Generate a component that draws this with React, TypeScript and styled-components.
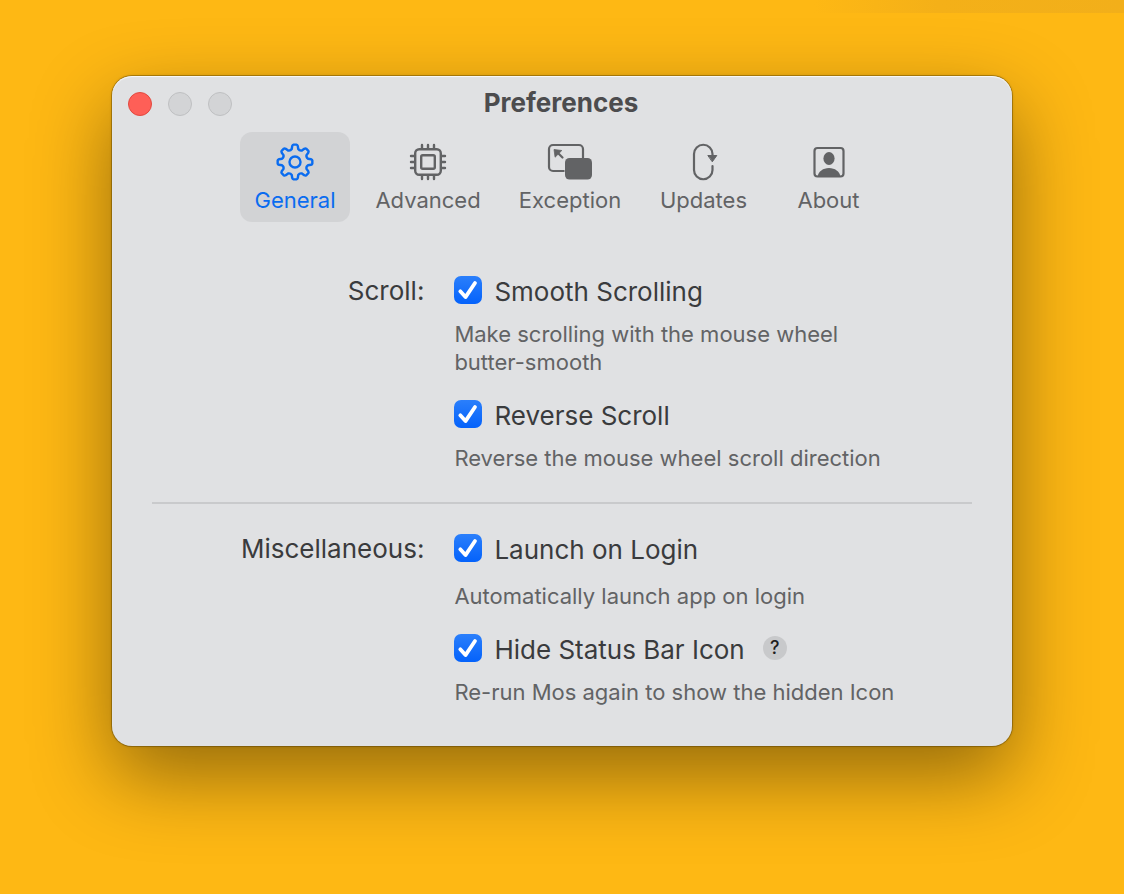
import React, { useState } from "react";
import styled, { createGlobalStyle } from "styled-components";

const GlobalStyle = createGlobalStyle`
  *, *::before, *::after { box-sizing: border-box; }
  html { min-height: 100%; background: #feb814; }
  body {
    margin: 0;
    font-family: Inter, "Noto Sans", sans-serif;
    -webkit-font-smoothing: antialiased;
  }
`;

const Desktop = styled.div`
  min-height: 100vh;
  padding: 76px 10%;
  background:
    linear-gradient(90deg, rgba(246, 176, 22, 0), #f4b018 40%, #f2af1a) top right / 310px 13px no-repeat,
    #feb814;
`;

const Window = styled.main`
  max-width: 900px;
  margin: 0 auto;
  padding-bottom: 40px;
  border-radius: 20px;
  background: #e0e1e3;
  box-shadow:
    inset 0 1px 1px rgba(255, 255, 255, 0.8),
    0 0 0 1px rgba(90, 65, 0, 0.4),
    0 0 3px rgba(0, 0, 0, 0.22),
    0 30px 80px rgba(0, 0, 0, 0.42);
`;

const TitleBar = styled.header`
  display: grid;
  grid-template-columns: 1fr auto 1fr;
  align-items: center;
  height: 56px;
  padding: 0 18px 0 16px;
`;

const WindowButtons = styled.div`
  display: flex;
  gap: 16px;
`;

const WindowButton = styled.button<{ $fill: string; $edge: string }>`
  width: 24px;
  height: 24px;
  padding: 0;
  border: 1px solid ${(p) => p.$edge};
  border-radius: 50%;
  background: ${(p) => p.$fill};
`;

const Title = styled.h1`
  margin: 0;
  padding-bottom: 2px;
  color: #4c4c4e;
  font-size: 26px;
  font-weight: 700;
  line-height: 32px;
`;

const Toolbar = styled.nav`
  display: grid;
  grid-template-columns: 110px 134px 128px 117px 111px;
  justify-content: center;
  gap: 11px;
`;

const Tab = styled.button<{ $active: boolean }>`
  display: flex;
  flex-direction: column;
  align-items: center;
  gap: 4px;
  height: 90px;
  padding: 10px 0 0;
  border: 0;
  border-radius: 12px;
  background: ${(p) => (p.$active ? "#d2d3d5" : "transparent")};
  color: ${(p) => (p.$active ? "#0a6cf0" : "#626365")};
  font: 400 22px/28px Inter, "Noto Sans", sans-serif;
`;

const Sections = styled.div`
  padding: 52px 40px 0;
`;

const Section = styled.section`
  display: grid;
  grid-template-columns: minmax(0, 272px) minmax(0, 1fr);
  column-gap: 30px;
`;

const SectionLabel = styled.h2`
  margin: 0;
  color: #3a3b3d;
  font-size: 26px;
  font-weight: 400;
  line-height: 34px;
  text-align: right;
`;

const Divider = styled.hr`
  height: 2px;
  margin: 30px 0 28px;
  border: 0;
  background: #c9cacc;
`;

const Options = styled.div`
  display: flex;
  flex-direction: column;
  gap: 22px;
`;

const OptionRow = styled.div`
  display: flex;
  align-items: center;
  height: 32px;
`;

const OptionLabel = styled.label`
  display: flex;
  align-items: center;
  gap: 12px;
  color: #3a3b3d;
  font-size: 26px;
  line-height: 32px;
`;

const OptionText = styled.span`
  padding-top: 4px;
`;

const CheckWrap = styled.span`
  display: grid;
  width: 28px;
  height: 28px;

  & > * {
    grid-area: 1 / 1;
  }

  svg {
    pointer-events: none;
  }
`;

const Check = styled.input`
  width: 28px;
  height: 28px;
  margin: 0;
  border-radius: 7px;
  appearance: none;
  background: #ffffff;

  &:checked {
    background: linear-gradient(#2b7ffb, #0462fb);
  }
`;

const Hint = styled.p<{ $roomy?: boolean }>`
  max-width: 450px;
  margin: ${(p) => (p.$roomy ? 18 : 14)}px 0 0;
  color: #626365;
  font-size: 22px;
  line-height: 28px;
`;

const HelpButton = styled.button`
  width: 24px;
  height: 24px;
  margin-left: 18px;
  padding: 0;
  border: 0;
  border-radius: 50%;
  background: #c8c9cb;
  color: #1e1e20;
  font: 500 18px/24px Inter, "Noto Sans", sans-serif;
`;

const gearPath = (() => {
  const parts: string[] = [];
  const point = (radius: number, degrees: number) => {
    const a = (degrees * Math.PI) / 180;
    return `${(19 + radius * Math.sin(a)).toFixed(2)} ${(19 - radius * Math.cos(a)).toFixed(2)}`;
  };
  for (let i = 0; i < 8; i++) {
    const c = i * 45;
    parts.push(`${i === 0 ? "M" : "L"}${point(13.4, c - 14)}`);
    parts.push(`L${point(16.2, c - 10)}`);
    parts.push(`Q${point(17.4, c - 8)} ${point(17.4, c - 5)}`);
    parts.push(`L${point(17.4, c + 5)}`);
    parts.push(`Q${point(17.4, c + 8)} ${point(16.2, c + 10)}`);
    parts.push(`L${point(13.4, c + 14)}`);
    parts.push(`Q${point(11.9, c + 22.5)} ${point(13.4, c + 31)}`);
  }
  return parts.join("") + "Z";
})();

const GearIcon = () => (
  <svg width="38" height="40" viewBox="0 -1 38 40" fill="none" stroke="currentColor" strokeWidth="2.4" strokeLinejoin="round" aria-hidden="true">
    <path d={gearPath} />
    <circle cx="19" cy="19" r="5.5" />
  </svg>
);

const ChipIcon = () => (
  <svg width="38" height="40" viewBox="0 -1 38 40" fill="none" stroke="currentColor" strokeWidth="2.4" strokeLinecap="round" aria-hidden="true">
    <rect x="6.2" y="6.2" width="25.6" height="25.6" rx="4" />
    <rect x="12.2" y="12.2" width="13.6" height="13.6" rx="1.5" />
    <path d="M13 5.5V2M19 5.5V2M25 5.5V2M13 36v-3.5M19 36v-3.5M25 36v-3.5M5.5 13H2M5.5 19H2M5.5 25H2M36 13h-3.5M36 19h-3.5M36 25h-3.5" />
  </svg>
);

const ExceptionIcon = () => (
  <svg width="46" height="40" viewBox="0 0 46 40" fill="none" stroke="currentColor" strokeWidth="2.2" aria-hidden="true">
    <path d="M17.5 29H6a4 4 0 0 1-4-4V7a4 4 0 0 1 4-4h26a4 4 0 0 1 4 4v9.5" />
    <rect x="18" y="16" width="27" height="21.5" rx="4.5" fill="currentColor" stroke="none" />
    <path d="M9.5 9.5l6 6" strokeLinecap="round" />
    <path d="M7 7.5l7.8 1-6.7 6.7Z" fill="currentColor" stroke="currentColor" strokeWidth="0.8" strokeLinejoin="round" />
  </svg>
);

const UpdatesIcon = () => (
  <svg width="28" height="40" viewBox="0 0 28 40" fill="none" stroke="currentColor" strokeWidth="2.2" strokeLinecap="round" aria-hidden="true">
    <path d="M22.5 13.5V12a9.25 9.25 0 0 0-18.5 0v16a9.25 9.25 0 0 0 18.5 0v-4" />
    <path d="M18.2 13.5h8.6l-4.3 6Z" fill="currentColor" strokeWidth="1" strokeLinejoin="round" />
  </svg>
);

const AboutIcon = () => (
  <svg width="34" height="40" viewBox="0 0 34 40" fill="none" stroke="currentColor" strokeWidth="2.2" aria-hidden="true">
    <rect x="2.5" y="6" width="29" height="28.5" rx="3" />
    <ellipse cx="17" cy="16.5" rx="5.6" ry="6.4" fill="currentColor" stroke="none" />
    <path d="M5.5 34.5c1-5 5.5-8.500 11.500-8.500s10.500 3.500 11.500 8.500Z" fill="currentColor" stroke="none" />
  </svg>
);

const CheckMark = () => (
  <svg width="28" height="28" viewBox="0 0 28 28" fill="none" stroke="#ffffff" strokeWidth="3.8" strokeLinecap="round" strokeLinejoin="round" aria-hidden="true">
    <path d="M6.300 15.300l5.200 5.800L21 7" />
  </svg>
);

const tabs = [
  { name: "General", Icon: GearIcon },
  { name: "Advanced", Icon: ChipIcon },
  { name: "Exception", Icon: ExceptionIcon },
  { name: "Updates", Icon: UpdatesIcon },
  { name: "About", Icon: AboutIcon },
];

type OptionProps = {
  id: string;
  label: string;
  hint: string;
  help?: boolean;
  roomy?: boolean;
};

function Option({ id, label, hint, help, roomy }: OptionProps) {
  const [checked, setChecked] = useState(true);
  return (
    <div>
      <OptionRow>
        <OptionLabel htmlFor={id}>
          <CheckWrap>
            <Check
              id={id}
              type="checkbox"
              checked={checked}
              aria-describedby={`${id}-hint`}
              onChange={(e) => setChecked(e.target.checked)}
            />
            {checked && <CheckMark />}
          </CheckWrap>
          <OptionText>{label}</OptionText>
        </OptionLabel>
        {help && <HelpButton type="button">?</HelpButton>}
      </OptionRow>
      <Hint id={`${id}-hint`} $roomy={roomy}>{hint}</Hint>
    </div>
  );
}

export default function App() {
  const [active, setActive] = useState("General");
  return (
    <>
      <GlobalStyle />
      <Desktop>
        <Window>
          <TitleBar>
            <WindowButtons>
              <WindowButton type="button" aria-label="Close" $fill="#fe5f57" $edge="#e2493f" />
              <WindowButton type="button" aria-label="Minimize" $fill="#d3d4d6" $edge="#bfc0c2" />
              <WindowButton type="button" aria-label="Zoom" $fill="#d3d4d6" $edge="#bfc0c2" />
            </WindowButtons>
            <Title>Preferences</Title>
          </TitleBar>
          <Toolbar>
            {tabs.map(({ name, Icon }) => (
              <Tab
                key={name}
                type="button"
                $active={active === name}
                aria-pressed={active === name}
                onClick={() => setActive(name)}
              >
                <Icon />
                {name}
              </Tab>
            ))}
          </Toolbar>
          <Sections>
            <Section>
              <SectionLabel>Scroll:</SectionLabel>
              <Options>
                <Option
                  id="smooth"
                  label="Smooth Scrolling"
                  hint="Make scrolling with the mouse wheel butter-smooth"
                />
                <Option
                  id="reverse"
                  label="Reverse Scroll"
                  hint="Reverse the mouse wheel scroll direction"
                />
              </Options>
            </Section>
            <Divider />
            <Section>
              <SectionLabel>Miscellaneous:</SectionLabel>
              <Options>
                <Option
                  id="launch"
                  label="Launch on Login"
                  hint="Automatically launch app on login"
                  roomy
                />
                <Option
                  id="hide"
                  label="Hide Status Bar Icon"
                  hint="Re-run Mos again to show the hidden Icon"
                  help
                />
              </Options>
            </Section>
          </Sections>
        </Window>
      </Desktop>
    </>
  );
}
